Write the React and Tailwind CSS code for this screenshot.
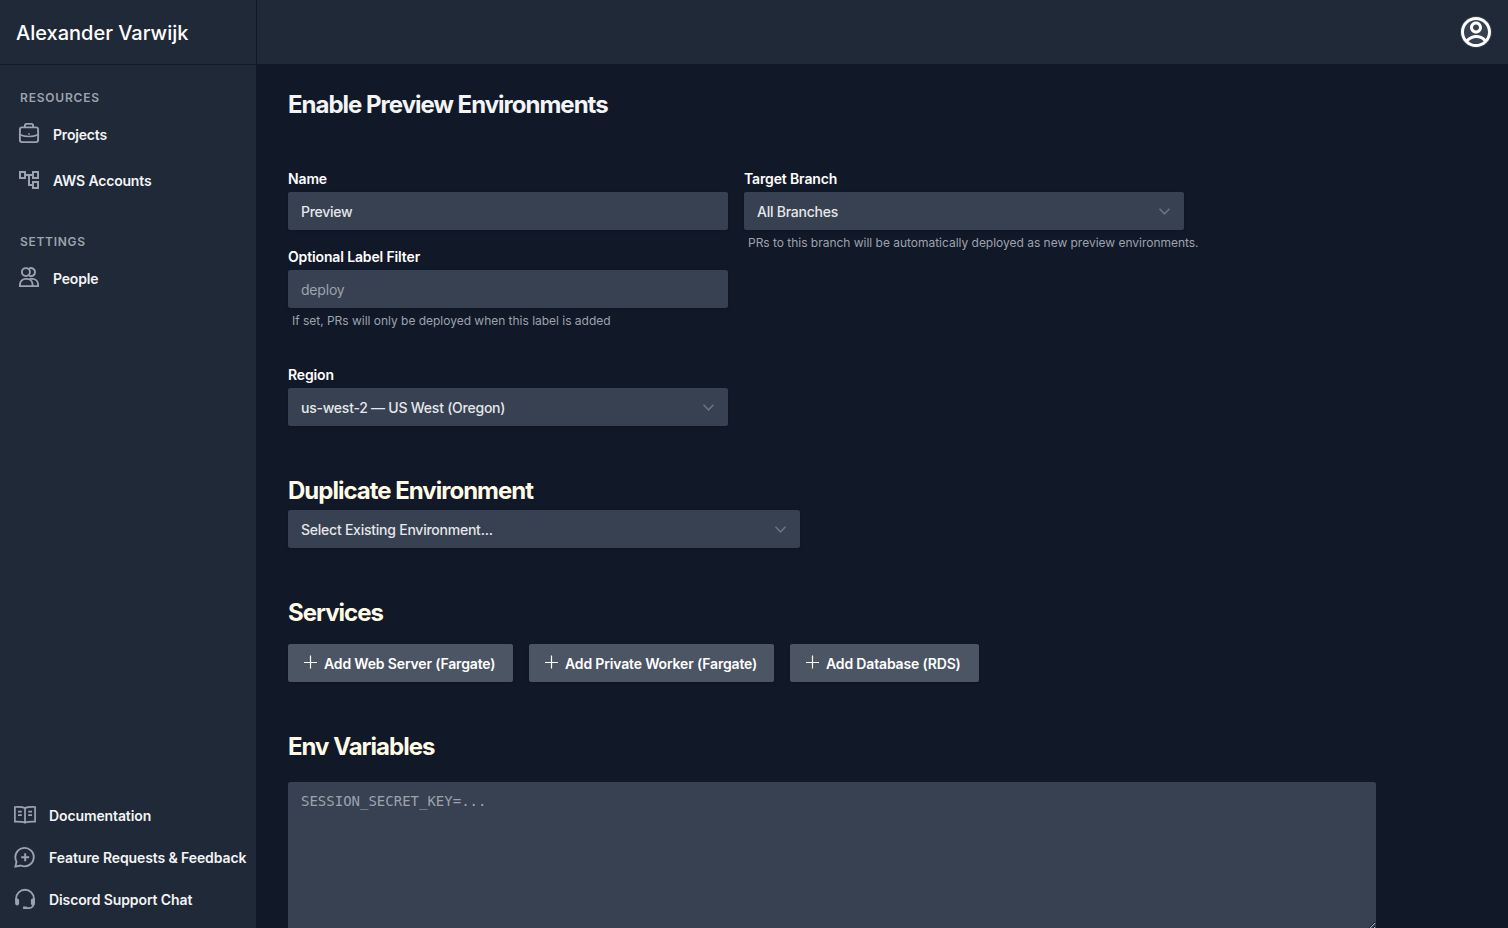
import React from "react";
import { RiAccountCircleLine } from "react-icons/ri";
import { MdOutlineAccountTree } from "react-icons/md";

const stroke = { fill: "none", stroke: "currentColor", strokeWidth: 1.9, viewBox: "0 0 24 24" };

function Briefcase() {
  return (
    <svg {...stroke} className="size-6">
      <rect x="2.9" y="6.4" width="18.2" height="14.7" rx="2" />
      <path d="M7.9 6.3V4.5c0-.9.7-1.6 1.6-1.6h5c.9 0 1.6.7 1.6 1.6v1.8" />
      <path d="M2.9 13.7c5.6 2.3 12.6 2.3 18.2 0M11.2 13h1.6" strokeWidth="1.6" />
    </svg>
  );
}

function People() {
  return (
    <svg {...stroke} strokeWidth="1.9" className="size-6">
      <circle cx="8.9" cy="7.1" r="4" />
      <path d="M12 3.5a4.1 4.1 0 1 1 0 7.2" />
      <path d="M2.9 21.1v-1.300c0-3.400 2.400-5.900 5.900-5.900h.9c3.500 0 5.900 2.500 5.900 5.900v1.300z" />
      <path d="M12.500 13.900h2.700c3.500 0 5.900 2.500 5.900 5.900v1.300h-5.500" />
    </svg>
  );
}

function Book() {
  return (
    <svg {...stroke} strokeWidth="1.7" className="size-6">
      <path d="M12 5.200C10 4 6 3.800 1.900 4v14.600c4-.1 8-.1 10.100 1.200 2.100-1.300 6.100-1.300 10.100-1.200V4C18 3.800 14 4 12 5.200zM12 5.200v14.300" />
      <path d="M5 8.700h3.800M5 12.200h3.800M15.200 8.700H19M15.200 12.200H19" />
    </svg>
  );
}

function ChatPlus() {
  return (
    <svg {...stroke} className="size-6">
      <path d="M2.400 21.600l1.100-5A9.200 9.200 0 1 1 7.700 20.500z" />
      <path d="M12.200 8.200v8M8.200 12.200h8" strokeWidth="2" />
    </svg>
  );
}

function Headset() {
  return (
    <svg {...stroke} className="size-6">
      <path d="M3.100 13v-1.300a8.900 8.900 0 0 1 17.800 0V16c0 3-2 5.100-5 5.100h-4" strokeWidth="1.900" />
      <path d="M2.100 11.500h2.100c1.100 0 1.900.8 1.900 1.900v3.200c0 1.100-.8 1.900-1.900 1.900-1.300 0-2.100-1-2.100-2.200zM21.900 11.500h-2.100c-1.100 0-1.900.8-1.900 1.900v3.200c0 1.100.8 1.900 1.900 1.900 1.300 0 2.100-1 2.100-2.200zM10.100 19.600h3.700v2.500h-3.700z" fill="currentColor" stroke="none" />
    </svg>
  );
}

function NavItem({ icon, className = "h-[46px]", children }) {
  return (
    <a className={`${className} flex items-center gap-3 pl-[17px] text-sm font-semibold tracking-[-0.18px] text-gray-100`}>
      <span className="-mt-[3px] text-[#9ca3af]">{icon}</span>
      <span className="pt-0.5">{children}</span>
    </a>
  );
}

function FooterItem({ icon, children }) {
  return (
    <a className="flex h-[42px] items-center gap-3 pl-[13px] text-sm font-semibold tracking-[-0.11px] whitespace-nowrap text-gray-100">
      <span className="-mt-[2px] text-[#9ca3af]">{icon}</span>
      {children}
    </a>
  );
}

function Label({ children }) {
  return <label className="block h-[26px] text-sm leading-[26px] font-semibold tracking-[-0.14px] text-white">{children}</label>;
}

function Select({ children }) {
  return (
    <div className="flex h-[38px] items-center justify-between rounded-[2px] bg-[#374151] pr-[13px] pl-[13px] text-sm font-medium tracking-[-0.24px] text-[#e5e7eb] shadow-sm">
      <span className="pt-0.5">{children}</span>
      <svg viewBox="0 0 14 14" className="size-[14px]" fill="none" stroke="#6b7280" strokeWidth="1.6">
        <path d="M2.500 4.800l5 5 5-5" />
      </svg>
    </div>
  );
}

function Hint({ children }) {
  return <p className="pt-1 pl-1 text-xs leading-[18px] tracking-[-0.02px] whitespace-nowrap text-[#9ca3af]">{children}</p>;
}

function SectionTitle({ children }) {
  return <h2 className="pt-0.5 text-2xl leading-[30px] font-bold tracking-[-1px] text-[#fffbe6]">{children}</h2>;
}

function AddButton({ width, children }) {
  return (
    <button className={`${width} flex h-[38px] items-center rounded-[2px] bg-[#4b5563] pl-4 text-sm font-semibold tracking-[-0.16px] whitespace-nowrap text-white shadow-sm`}>
      <svg viewBox="0 0 14 14" className="-mt-0.5 mr-1.5 size-[14px] shrink-0" fill="none" stroke="currentColor" strokeWidth="1.2">
        <path d="M6.500 .5v13M0 7.500h13" />
      </svg>
      <span className="pt-0.5">{children}</span>
    </button>
  );
}

export default function App() {
  return (
    <div className="flex h-[928px] w-[1508px] overflow-hidden bg-[#111827] font-['Inter',sans-serif]">
      <aside className="flex w-64 shrink-0 flex-col bg-[#1f2937]">
        <div className="flex h-[65px] items-center border-b border-[#111827] pt-0.5 pl-4 text-xl font-medium text-white">
          Alexander Varwijk
        </div>
        <nav className="flex-1">
          <h3 className="mt-6 h-[22px] pl-5 text-xs leading-[18px] font-semibold tracking-[0.8px] text-[#9ca3af]">RESOURCES</h3>
          <NavItem icon={<Briefcase />}>Projects</NavItem>
          <NavItem icon={<MdOutlineAccountTree className="mt-0.5 size-6" />}>AWS Accounts</NavItem>
          <h3 className="mt-[30px] h-[23px] pl-5 text-xs leading-[18px] font-semibold tracking-[0.7px] text-[#9ca3af]">SETTINGS</h3>
          <NavItem className="h-11" icon={<People />}>People</NavItem>
        </nav>
        <div className="pb-[7px]">
          <FooterItem icon={<Book />}>Documentation</FooterItem>
          <FooterItem icon={<ChatPlus />}>Feature Requests &amp; Feedback</FooterItem>
          <FooterItem icon={<Headset />}>Discord Support Chat</FooterItem>
        </div>
      </aside>
      <div className="flex min-w-0 flex-1 flex-col">
        <header className="flex h-16 shrink-0 items-center justify-end border-l border-[#111827] bg-[#1f2937] pr-4">
          <div className="flex size-8 items-center justify-center rounded-full bg-[#374151] text-white">
            <RiAccountCircleLine className="size-9 shrink-0" />
          </div>
        </header>
        <main className="min-h-0 flex-1 overflow-hidden pt-6 pl-8">
          <h1 className="pt-0.5 text-2xl leading-[30px] font-bold tracking-[-1px] text-gray-100">Enable Preview Environments</h1>
          <div className="mt-[46px] flex gap-4">
            <div className="w-[440px]">
              <Label>Name</Label>
              <div className="flex h-[38px] items-center rounded-[2px] bg-[#374151] pt-0.5 pl-[13px] text-sm font-medium tracking-[-0.28px] text-[#e5e7eb] shadow-sm">Preview</div>
              <div className="h-[14px]" />
              <Label>Optional Label Filter</Label>
              <div className="flex h-[38px] items-center rounded-[2px] bg-[#374151] pt-0.5 pl-[13px] text-sm tracking-[-0.2px] text-[#9ca3af] shadow-sm">deploy</div>
              <Hint>If set, PRs will only be deployed when this label is added</Hint>
            </div>
            <div className="w-[440px]">
              <Label>Target Branch</Label>
              <Select>All Branches</Select>
              <Hint>PRs to this branch will be automatically deployed as new preview environments.</Hint>
            </div>
          </div>
          <div className="mt-8 w-[440px]">
            <Label>Region</Label>
            <Select>us-west-2 — US West (Oregon)</Select>
          </div>
          <div className="mt-12 w-[512px]">
            <SectionTitle>Duplicate Environment</SectionTitle>
            <div className="h-1" />
            <Select>Select Existing Environment...</Select>
          </div>
          <div className="mt-12">
            <SectionTitle>Services</SectionTitle>
            <div className="mt-4 flex gap-4">
              <AddButton width="w-[225px]">Add Web Server (Fargate)</AddButton>
              <AddButton width="w-[245px]">Add Private Worker (Fargate)</AddButton>
              <AddButton width="w-[189px]">Add Database (RDS)</AddButton>
            </div>
          </div>
          <div className="mt-12">
            <SectionTitle>Env Variables</SectionTitle>
            <textarea
              placeholder="SESSION_SECRET_KEY=..."
              className="mt-5 block h-[148px] w-[1088px] resize rounded-t-[2px] bg-[#374151] px-[13px] py-[9px] font-['DejaVu_Sans_Mono',monospace] text-sm text-gray-200 placeholder-[#9ca3af]"
            />
          </div>
        </main>
      </div>
    </div>
  );
}
